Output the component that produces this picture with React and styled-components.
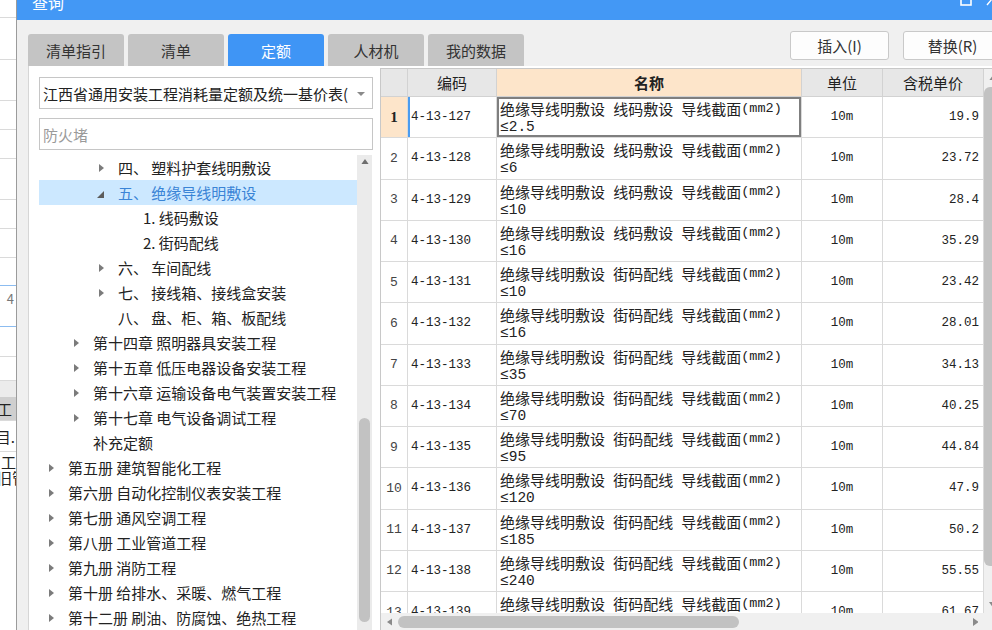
import React from 'react';
import styled, { createGlobalStyle } from 'styled-components';

const UI = `"Noto Sans CJK SC", "Noto Sans", sans-serif`;
const GRIDF = `"Liberation Mono", "Noto Sans CJK SC", monospace`;

const GlobalStyle = createGlobalStyle`
  html, body { margin: 0; padding: 0; background: #fff; overflow: hidden; }
  body { font-family: ${UI}; }
  * { box-sizing: border-box; }
`;

const Screen = styled.div`
  width: 992px;
  height: 630px;
  display: flex;
  overflow: hidden;
  background: #fff;
`;

/* background application strip */
const BgStrip = styled.div`
  width: 16px;
  flex-shrink: 0;
  display: flex;
  flex-direction: column;
  overflow: hidden;
  font-family: ${UI};
  font-size: 15px;
  color: #222;
`;
const BgRow = styled.div`
  height: ${(p) => p.$h}px;
  flex-shrink: 0;
  border-bottom: 1px solid ${(p) => (p.$blue ? '#8cbcf0' : p.$none ? 'transparent' : '#dadada')};
  background: ${(p) => p.$bg || '#fff'};
  display: flex;
  align-items: ${(p) => (p.$top ? 'flex-start' : 'center')};
  padding-top: ${(p) => (p.$top ? 6 : 0)}px;
  justify-content: flex-end;
  padding-right: ${(p) => p.$pr ?? 2}px;
  line-height: 1;
  white-space: nowrap;
  overflow: hidden;
  color: ${(p) => p.$color || '#222'};
  font-size: ${(p) => p.$fs || 15}px;
`;
const BgStack = styled.div`
  display: flex;
  flex-direction: column;
  align-items: flex-start;
  line-height: 16px;
  margin-top: 2px;
  white-space: nowrap;
  overflow: hidden;
`;
const BgLine = styled.span`
  white-space: nowrap;
  margin-left: ${(p) => p.$ml}px;
`;

/* dialog */
const Dialog = styled.div`
  flex: 1;
  min-width: 0;
  display: flex;
  flex-direction: column;
  background: #f0f0f0;
  border-left: 1px solid #9b9b9b;
  overflow: hidden;
`;
const TitleBar = styled.div`
  height: 20px;
  flex-shrink: 0;
  background: #4398f5;
  display: flex;
  align-items: flex-start;
  padding-left: 15px;
  overflow: hidden;
`;
const Title = styled.div`
  color: #fff;
  font-size: 16px;
  line-height: 20px;
  margin-top: -8px;
`;
const WinIcons = styled.div`
  margin-left: auto;
  display: flex;
  gap: 14px;
  margin-top: -8px;
  margin-right: -6px;
`;
const Body = styled.div`
  flex: 1;
  min-height: 0;
  display: flex;
  flex-direction: column;
  padding-left: 11px;
`;
const TopRow = styled.div`
  height: 46px;
  flex-shrink: 0;
  display: flex;
  align-items: flex-end;
`;
const Tabs = styled.div`
  display: flex;
  gap: 4px;
  flex-shrink: 0;
`;
const Tab = styled.div`
  width: 96px;
  height: 32px;
  border-radius: 3px 3px 0 0;
  background: ${(p) => (p.$active ? '#3f95f5' : '#c4c4c4')};
  color: ${(p) => (p.$active ? '#fff' : '#333')};
  font-size: 15px;
  display: flex;
  align-items: center;
  justify-content: center;
`;
const Buttons = styled.div`
  align-self: flex-start;
  margin-top: 11px;
  margin-left: 266px;
  display: flex;
  gap: 14px;
  flex-shrink: 0;
`;
const Button = styled.div`
  width: 99px;
  height: 29px;
  border: 1px solid #c9c9c9;
  border-radius: 3px;
  background: #fdfdfd;
  color: #333;
  font-size: 15px;
  display: flex;
  align-items: center;
  justify-content: center;
  flex-shrink: 0;
`;

const Content = styled.div`
  flex: 1;
  min-height: 0;
  display: flex;
  background: #fff;
  border-left: 1px solid #d6d6d6;
  overflow: hidden;
`;

/* left pane */
const LeftPane = styled.div`
  width: 351px;
  flex-shrink: 0;
  display: flex;
  flex-direction: column;
  padding: 11px 0 0 10px;
`;
const Select = styled.div`
  width: 334px;
  height: 32px;
  flex-shrink: 0;
  border: 1px solid #c6c6c6;
  display: flex;
  align-items: center;
  padding: 0 22px 0 3px;
  font-size: 15px;
  color: #222;
  white-space: nowrap;
  overflow: hidden;
  position: relative;
`;
const SelectArrow = styled.span`
  position: absolute;
  right: 7px;
  top: 14px;
  width: 0;
  height: 0;
  border-left: 4px solid transparent;
  border-right: 4px solid transparent;
  border-top: 4px solid #8a8a8a;
`;
const Search = styled.div`
  width: 334px;
  height: 32px;
  flex-shrink: 0;
  margin-top: 9px;
  border: 1px solid #c6c6c6;
  display: flex;
  align-items: center;
  padding-left: 3px;
  font-size: 15px;
  color: #9a9a9a;
`;
const TreeArea = styled.div`
  flex: 1;
  min-height: 0;
  margin-top: 5px;
  display: flex;
`;
const TreeList = styled.div`
  width: 318px;
  flex-shrink: 0;
  display: flex;
  flex-direction: column;
  overflow: hidden;
`;
const TreeRow = styled.div`
  height: 25px;
  flex-shrink: 0;
  display: flex;
  align-items: center;
  padding-left: ${(p) => 8 + p.$level * 25}px;
  background: ${(p) => (p.$selected ? '#cce8ff' : 'transparent')};
  color: ${(p) => (p.$selected ? '#3a84d6' : '#222')};
  font-size: 15px;
  white-space: pre;
`;
const ArrowBox = styled.span`
  width: 21px;
  flex-shrink: 0;
  display: flex;
  align-items: center;
  padding-left: ${(p) => (p.$open ? 0 : 2)}px;
  padding-top: ${(p) => (p.$open ? 3 : 0)}px;
`;
const TreeScroll = styled.div`
  width: 15px;
  flex-shrink: 0;
  background: #ebebeb;
  display: flex;
  flex-direction: column;
  align-items: center;
`;
const ScrollArrowBox = styled.div`
  height: ${(p) => p.$h || 14}px;
  margin-top: ${(p) => p.$mt || 0}px;
  width: 100%;
  flex-shrink: 0;
  display: flex;
  align-items: center;
  justify-content: center;
`;
const VThumb = styled.div`
  width: ${(p) => p.$w || 11}px;
  height: ${(p) => p.$len}px;
  margin-top: ${(p) => p.$top}px;
  border-radius: 6px;
  background: #c2c2c2;
  flex-shrink: 0;
`;

/* table */
const TablePane = styled.div`
  width: 621px;
  flex-shrink: 0;
  margin-top: 2px;
  border-left: 1px solid #c8c8c8;
  border-top: 1px solid #c8c8c8;
  display: flex;
  flex-direction: column;
`;
const TableMain = styled.div`
  flex: 1;
  min-height: 0;
  display: flex;
`;
const Grid = styled.div`
  width: 603px;
  flex-shrink: 0;
  display: flex;
  flex-direction: column;
  overflow: hidden;
`;
const COLS = '27px 89px 305px 81px 101px';
const HeaderRow = styled.div`
  display: grid;
  grid-template-columns: ${COLS};
  height: 28px;
  flex-shrink: 0;
`;
const HeadCell = styled.div`
  background: ${(p) => (p.$accent ? '#fde5ca' : '#e7e7e7')};
  border-right: 1px solid #d2d2d2;
  border-bottom: 1px solid #d2d2d2;
  display: flex;
  align-items: center;
  justify-content: center;
  font-size: 15px;
  font-weight: ${(p) => (p.$accent ? 700 : 400)};
  color: #222;
`;
const DataRow = styled.div`
  display: grid;
  grid-template-columns: ${COLS};
  height: 41.25px;
  flex-shrink: 0;
`;
const Cell = styled.div`
  border-right: 1px solid #dadada;
  border-bottom: 1px solid #dadada;
  font-family: ${GRIDF};
  color: #222;
  display: flex;
  align-items: center;
  overflow: hidden;
`;
const NumCell = styled(Cell)`
  justify-content: center;
  background: ${(p) => (p.$current ? '#fde5ca' : '#fff')};
  font-size: ${(p) => (p.$current ? 15 : 13)}px;
  font-family: ${(p) => (p.$current ? '"Liberation Serif", serif' : GRIDF)};
  font-weight: ${(p) => (p.$current ? 700 : 400)};
  color: ${(p) => (p.$current ? '#222' : '#444')};
`;
const CodeCell = styled(Cell)`
  font-size: 12.5px;
  padding-left: 3px;
  box-shadow: ${(p) => (p.$current ? 'inset 2px 0 0 #4a9cf0' : 'none')};
`;
const NameCell = styled(Cell)`
  font-family: ${UI};
  font-size: 15px;
  line-height: 18px;
  flex-direction: column;
  align-items: flex-start;
  justify-content: flex-start;
  padding: 3px 0 0 3px;
  white-space: pre;
  box-shadow: ${(p) => (p.$current ? 'inset 0 0 0 2px #7f7f7f' : 'none')};
`;
const NameLine = styled.div`
  height: 18px;
  display: flex;
  align-items: center;
  white-space: pre;
`;
const Ascii = styled.span`
  font-family: "Liberation Mono", monospace;
  font-size: ${(p) => p.$fs || 13.5}px;
  white-space: pre;
`;
const UnitCell = styled(Cell)`
  font-size: 12.5px;
  justify-content: center;
`;
const PriceCell = styled(Cell)`
  font-size: 12.5px;
  justify-content: flex-end;
  padding-right: 4px;
`;
const VScroll = styled.div`
  width: 17px;
  flex-shrink: 0;
  background: #f0f0f0;
  display: flex;
  flex-direction: column;
  align-items: flex-start;
`;
const HScrollRow = styled.div`
  height: 17px;
  flex-shrink: 0;
  display: flex;
  background: #f0f0f0;
`;
const HArrowBox = styled.div`
  width: 17px;
  flex-shrink: 0;
  display: flex;
  align-items: center;
  justify-content: center;
`;
const HTrack = styled.div`
  width: 569px;
  flex-shrink: 0;
  display: flex;
  align-items: center;
`;
const HThumb = styled.div`
  height: 12px;
  width: ${(p) => p.$len}px;
  margin-left: ${(p) => p.$left}px;
  border-radius: 6px;
  background: #c2c2c2;
`;

const Tri = ({ dir, color = '#7a7a7a', size = 5 }) => {
  const s = size;
  const pts = {
    up: `0,${s * 0.7} ${s},${s * 0.7} ${s / 2},0`,
    down: `0,0 ${s},0 ${s / 2},${s * 0.7}`,
    left: `${s * 0.7},0 ${s * 0.7},${s} 0,${s / 2}`,
    right: `0,0 0,${s} ${s * 0.7},${s / 2}`,
  }[dir];
  const w = dir === 'up' || dir === 'down' ? s : s * 0.7;
  const h = dir === 'up' || dir === 'down' ? s * 0.7 : s;
  return (
    <svg width={w} height={h} viewBox={`0 0 ${w} ${h}`}>
      <polygon points={pts} fill={color} />
    </svg>
  );
};

const TreeArrow = ({ open }) =>
  open ? (
    <svg width="7" height="7" viewBox="0 0 7 7">
      <polygon points="7,0 7,7 0,7" fill="#5c5c5c" />
    </svg>
  ) : (
    <svg width="5" height="8" viewBox="0 0 5 8">
      <polygon points="0,0 0,8 5,4" fill="#7b7b7b" />
    </svg>
  );

const tree = [
  { l: 2, a: 'r', t: '四、 塑料护套线明敷设' },
  { l: 2, a: 'o', t: '五、 绝缘导线明敷设', sel: true },
  { l: 3, t: '1. 线码敷设' },
  { l: 3, t: '2. 街码配线' },
  { l: 2, a: 'r', t: '六、 车间配线' },
  { l: 2, a: 'r', t: '七、 接线箱、接线盒安装' },
  { l: 2, t: '八、 盘、柜、箱、板配线' },
  { l: 1, a: 'r', t: '第十四章 照明器具安装工程' },
  { l: 1, a: 'r', t: '第十五章 低压电器设备安装工程' },
  { l: 1, a: 'r', t: '第十六章 运输设备电气装置安装工程' },
  { l: 1, a: 'r', t: '第十七章 电气设备调试工程' },
  { l: 1, t: '补充定额' },
  { l: 0, a: 'r', t: '第五册 建筑智能化工程' },
  { l: 0, a: 'r', t: '第六册 自动化控制仪表安装工程' },
  { l: 0, a: 'r', t: '第七册 通风空调工程' },
  { l: 0, a: 'r', t: '第八册 工业管道工程' },
  { l: 0, a: 'r', t: '第九册 消防工程' },
  { l: 0, a: 'r', t: '第十册 给排水、采暖、燃气工程' },
  { l: 0, a: 'r', t: '第十二册 刷油、防腐蚀、绝热工程' },
];

const rows = [
  ['4-13-127', '线码敷设', '2.5', '19.9'],
  ['4-13-128', '线码敷设', '6', '23.72'],
  ['4-13-129', '线码敷设', '10', '28.4'],
  ['4-13-130', '线码敷设', '16', '35.29'],
  ['4-13-131', '街码配线', '10', '23.42'],
  ['4-13-132', '街码配线', '16', '28.01'],
  ['4-13-133', '街码配线', '35', '34.13'],
  ['4-13-134', '街码配线', '70', '40.25'],
  ['4-13-135', '街码配线', '95', '44.84'],
  ['4-13-136', '街码配线', '120', '47.9'],
  ['4-13-137', '街码配线', '185', '50.2'],
  ['4-13-138', '街码配线', '240', '55.55'],
  ['4-13-139', '街码配线', '300', '61.67'],
];

const bgRows = [
  { h: 18 }, { h: 42 }, { h: 41 }, { h: 29 }, { h: 29 }, { h: 41 }, { h: 29 }, { h: 29 },
  { h: 28, blue: true },
  { h: 41, blue: true, top: true, text: '4', color: '#777', fs: 13 },
  { h: 30 }, { h: 24 },
  { h: 16, bg: '#ececec', none: true },
  { h: 24, bg: '#cfcfcf', text: '工', pr: 4 },
  { h: 31, text: '项目.', pr: 1 },
];

export default function App() {
  return (
    <>
      <GlobalStyle />
      <Screen>
        <BgStrip>
          {bgRows.map((r, i) => (
            <BgRow key={i} $h={r.h} $blue={r.blue} $bg={r.bg} $none={r.none} $top={r.top} $color={r.color} $fs={r.fs} $pr={r.pr}>
              {r.text}
            </BgRow>
          ))}
          <BgStack>
            <BgLine $ml={1}>工作</BgLine>
            <BgLine $ml={-3}>旧管</BgLine>
          </BgStack>
        </BgStrip>

        <Dialog>
          <TitleBar>
            <Title>查询</Title>
            <WinIcons>
              <svg width="12" height="14" viewBox="0 0 12 14">
                <rect x="1" y="1" width="10" height="12" fill="none" stroke="#fff" strokeWidth="1.6" />
              </svg>
              <svg width="12" height="14" viewBox="0 0 12 14">
                <path d="M1 1 L11 13 M11 1 L1 13" stroke="#fff" strokeWidth="1.4" />
              </svg>
            </WinIcons>
          </TitleBar>

          <Body>
            <TopRow>
              <Tabs>
                <Tab>清单指引</Tab>
                <Tab>清单</Tab>
                <Tab $active>定额</Tab>
                <Tab>人材机</Tab>
                <Tab>我的数据</Tab>
              </Tabs>
              <Buttons>
                <Button>插入(I)</Button>
                <Button>替换(R)</Button>
              </Buttons>
            </TopRow>

            <Content>
              <LeftPane>
                <Select>
                  江西省通用安装工程消耗量定额及统一基价表(
                  <SelectArrow />
                </Select>
                <Search>防火堵</Search>
                <TreeArea>
                  <TreeList>
                    {tree.map((n, i) => (
                      <TreeRow key={i} $level={n.l} $selected={n.sel}>
                        <ArrowBox $open={n.a === 'o'}>{n.a && <TreeArrow open={n.a === 'o'} />}</ArrowBox>
                        {n.t}
                      </TreeRow>
                    ))}
                  </TreeList>
                  <TreeScroll>
                    <ScrollArrowBox $h={13}>
                      <Tri dir="up" size={8} color="#6e6e6e" />
                    </ScrollArrowBox>
                    <VThumb $top={250} $len={204} />
                  </TreeScroll>
                </TreeArea>
              </LeftPane>

              <TablePane>
                <TableMain>
                  <Grid>
                    <HeaderRow>
                      <HeadCell />
                      <HeadCell>编码</HeadCell>
                      <HeadCell $accent>名称</HeadCell>
                      <HeadCell>单位</HeadCell>
                      <HeadCell>含税单价</HeadCell>
                    </HeaderRow>
                    {rows.map((r, i) => {
                      const cur = i === 0;
                      return (
                        <DataRow key={i}>
                          <NumCell $current={cur}>{i + 1}</NumCell>
                          <CodeCell $current={cur}>{r[0]}</CodeCell>
                          <NameCell $current={cur}>
                            <NameLine>
                              绝缘导线明敷设<Ascii> </Ascii>{r[1]}<Ascii> </Ascii>导线截面
                              <Ascii>(mm2)</Ascii>
                            </NameLine>
                            <NameLine>
                              <Ascii $fs={14.5}>≤{r[2]}</Ascii>
                            </NameLine>
                          </NameCell>
                          <UnitCell>10m</UnitCell>
                          <PriceCell>{r[3]}</PriceCell>
                        </DataRow>
                      );
                    })}
                  </Grid>
                  <VScroll>
                    <ScrollArrowBox $h={17}>
                      <Tri dir="up" size={8} color="#8a8a8a" />
                    </ScrollArrowBox>
                    <VThumb $top={1} $len={479} $w={13} />
                    <ScrollArrowBox $h={17} $mt={30}>
                      <Tri dir="down" size={8} color="#8a8a8a" />
                    </ScrollArrowBox>
                  </VScroll>
                </TableMain>
                <HScrollRow>
                  <HArrowBox>
                    <Tri dir="left" size={8} color="#8a8a8a" />
                  </HArrowBox>
                  <HTrack>
                    <HThumb $left={0} $len={341} />
                  </HTrack>
                  <HArrowBox>
                    <Tri dir="right" size={8} color="#8a8a8a" />
                  </HArrowBox>
                </HScrollRow>
              </TablePane>
            </Content>
          </Body>
        </Dialog>
      </Screen>
    </>
  );
}
